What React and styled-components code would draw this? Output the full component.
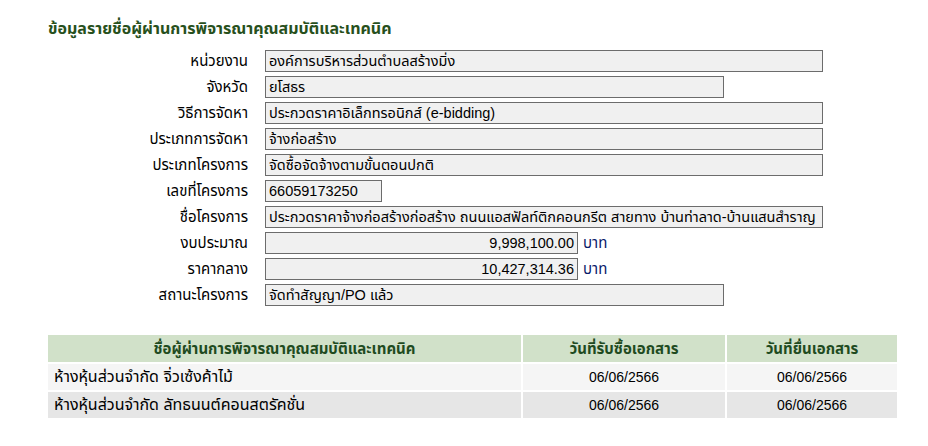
import React from 'react'
import styled, { createGlobalStyle } from 'styled-components'

const GlobalStyle = createGlobalStyle`
    body {
        margin: 0;
        background: #fff;
        font-family: Tahoma, "Liberation Sans", "Noto Sans Thai", "Noto Sans", sans-serif;
        font-size: 14px;
        color: #000;
    }
`

const Page = styled.div`
    width: 928px;
    height: 446px;
    padding: 19px 0 0 48px;
    box-sizing: border-box;
`

const Title = styled.h3`
    margin: 0 0 11px;
    font-size: 16px;
    font-weight: bold;
    color: #27501c;
    line-height: 20px;
`

const Form = styled.div`
    display: grid;
    grid-template-columns: 200px 1fr;
    column-gap: 17px;
    row-gap: 4px;
`

const Label = styled.div`
    text-align: right;
    font-size: 15px;
    line-height: 22px;
    height: 22px;
    white-space: nowrap;
`

const FieldRow = styled.div`
    display: flex;
    align-items: center;
    gap: 5px;
`

const Field = styled.div`
    width: ${p => p.$w}px;
    height: 22px;
    box-sizing: border-box;
    border: 1px solid #6c6c6c;
    background: #f0f0f0;
    padding: 0 3px;
    font-size: 14.5px;
    line-height: 20px;
    white-space: nowrap;
    overflow: hidden;
    text-align: ${p => (p.$num ? 'right' : 'left')};
`

const Unit = styled.span`
    color: #0a1a6a;
    font-size: 15px;
    line-height: 22px;
`

const Table = styled.div`
    margin-top: 29px;
    width: 849px;
    display: grid;
    grid-template-columns: 473px 202px 170px;
    gap: 2px;
`

const HeadCell = styled.div`
    background: #d1e1c9;
    color: #1f4b1f;
    font-size: 15px;
    font-weight: bold;
    text-align: center;
    height: 27px;
    line-height: 27px;
`

const Cell = styled.div`
    background: ${p => (p.$alt ? '#e6e6e6' : '#f5f5f5')};
    text-align: ${p => (p.$center ? 'center' : 'left')};
    font-size: ${p => (p.$center ? '14px' : '16px')};
    padding: 0 6px;
    height: 26px;
    line-height: 26px;
    white-space: nowrap;
`

const fields = [
    { label: 'หน่วยงาน', value: 'องค์การบริหารส่วนตำบลสร้างมิ่ง', w: 558 },
    { label: 'จังหวัด', value: 'ยโสธร', w: 459 },
    { label: 'วิธีการจัดหา', value: 'ประกวดราคาอิเล็กทรอนิกส์ (e-bidding)', w: 558 },
    { label: 'ประเภทการจัดหา', value: 'จ้างก่อสร้าง', w: 558 },
    { label: 'ประเภทโครงการ', value: 'จัดซื้อจัดจ้างตามขั้นตอนปกติ', w: 558 },
    { label: 'เลขที่โครงการ', value: '66059173250', w: 117 },
    { label: 'ชื่อโครงการ', value: 'ประกวดราคาจ้างก่อสร้างก่อสร้าง ถนนแอสฟัลท์ติกคอนกรีต สายทาง บ้านท่าลาด-บ้านแสนสำราญ', w: 558 },
    { label: 'งบประมาณ', value: '9,998,100.00', w: 313, num: true, unit: 'บาท' },
    { label: 'ราคากลาง', value: '10,427,314.36', w: 313, num: true, unit: 'บาท' },
    { label: 'สถานะโครงการ', value: 'จัดทำสัญญา/PO แล้ว', w: 459 },
]

const bidders = [
    { name: 'ห้างหุ้นส่วนจำกัด จิ่วเซ้งค้าไม้', got: '06/06/2566', sent: '06/06/2566' },
    { name: 'ห้างหุ้นส่วนจำกัด ลัทธนนต์คอนสตรัคชั่น', got: '06/06/2566', sent: '06/06/2566' },
]

export default function App() {
    return (
        <Page>
            <GlobalStyle />
            <Title>ข้อมูลรายชื่อผู้ผ่านการพิจารณาคุณสมบัติและเทคนิค</Title>
            <Form>
                {fields.map(f => (
                    <React.Fragment key={f.label}>
                        <Label>{f.label}</Label>
                        <FieldRow>
                            <Field $w={f.w} $num={f.num}>{f.value}</Field>
                            {f.unit && <Unit>{f.unit}</Unit>}
                        </FieldRow>
                    </React.Fragment>
                ))}
            </Form>
            <Table>
                <HeadCell>ชื่อผู้ผ่านการพิจารณาคุณสมบัติและเทคนิค</HeadCell>
                <HeadCell>วันที่รับซื้อเอกสาร</HeadCell>
                <HeadCell>วันที่ยื่นเอกสาร</HeadCell>
                {bidders.map((b, i) => (
                    <React.Fragment key={b.name}>
                        <Cell $alt={i % 2 === 1}>{b.name}</Cell>
                        <Cell $alt={i % 2 === 1} $center>{b.got}</Cell>
                        <Cell $alt={i % 2 === 1} $center>{b.sent}</Cell>
                    </React.Fragment>
                ))}
            </Table>
        </Page>
    )
}
